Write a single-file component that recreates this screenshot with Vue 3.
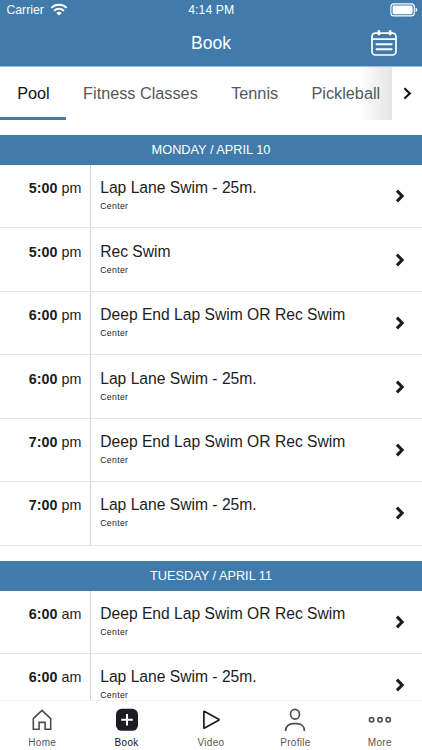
<script setup>
import { ref } from 'vue'

const tabs = ['Pool', 'Fitness Classes', 'Tennis', 'Pickleball']
const activeTab = ref('Pool')
const activeNav = ref('Book')

const days = [
  {
    title: 'MONDAY / APRIL 10',
    classes: [
      { time: '5:00', half: 'pm', name: 'Lap Lane Swim - 25m.' },
      { time: '5:00', half: 'pm', name: 'Rec Swim' },
      { time: '6:00', half: 'pm', name: 'Deep End Lap Swim OR Rec Swim' },
      { time: '6:00', half: 'pm', name: 'Lap Lane Swim - 25m.' },
      { time: '7:00', half: 'pm', name: 'Deep End Lap Swim OR Rec Swim' },
      { time: '7:00', half: 'pm', name: 'Lap Lane Swim - 25m.' },
    ],
  },
  {
    title: 'TUESDAY / APRIL 11',
    classes: [
      { time: '6:00', half: 'am', name: 'Deep End Lap Swim OR Rec Swim' },
      { time: '6:00', half: 'am', name: 'Lap Lane Swim - 25m.' },
    ],
  },
]

const navItems = ['Home', 'Book', 'Video', 'Profile', 'More']
</script>

<template>
  <div class="app">
    <header class="top">
      <div class="status">
        <div class="carrier">
          <span>Carrier</span>
          <svg width="18" height="13" viewBox="0 0 18 13" fill="none" stroke="#fff" stroke-width="2">
            <path d="M1.3 4.9A10.9 10.9 0 0 1 16.7 4.9" />
            <path d="M4.1 7.9A6.9 6.9 0 0 1 13.9 7.9" />
            <path d="M9 12.6L6.4 10A3.7 3.7 0 0 1 11.6 10Z" fill="#fff" stroke="none" />
          </svg>
        </div>
        <span class="clock">4:14 PM</span>
        <svg class="battery" width="28" height="14" viewBox="0 0 28 14">
          <rect x="0.9" y="0.9" width="23.4" height="12" rx="3" fill="none" stroke="#fff" stroke-width="1.1" />
          <rect x="2.6" y="2.6" width="20" height="8.6" rx="1.4" fill="#fff" />
          <path d="M25.6 4.7Q27.4 5.3 27.4 6.9T25.6 9.1Z" fill="#fff" />
        </svg>
      </div>
      <div class="title-bar">
        <h1>Book</h1>
        <svg class="calendar" width="28" height="28" viewBox="0 0 28 28" fill="none" stroke="#fff" stroke-width="1.7" stroke-linecap="round">
          <rect x="2" y="4.2" width="24" height="21.8" rx="3.4" />
          <path d="M2 10.2H26" />
          <path d="M8.9 2.4V5M20.1 2.4V5" stroke-width="2.8" />
          <path d="M6.5 15.2H21.7M6.5 20.3H21.7" stroke-width="1.9" />
        </svg>
      </div>
    </header>

    <nav class="tabs">
      <div class="tab-list">
        <div
          v-for="tab in tabs"
          :key="tab"
          class="tab"
          :class="{ active: tab === activeTab }"
          @click="activeTab = tab"
        >{{ tab }}</div>
        <div class="fade"></div>
      </div>
      <div class="tab-next">
        <svg width="9" height="13" viewBox="0 0 9 13" fill="none" stroke="#111" stroke-width="2.1">
          <path d="M1.4 1.3L6.8 6.4L1.4 11.5" />
        </svg>
      </div>
    </nav>

    <main class="schedule">
      <section v-for="day in days" :key="day.title" class="day">
        <h2>{{ day.title }}</h2>
        <div v-for="(item, i) in day.classes" :key="i" class="row">
          <div class="time"><b>{{ item.time }}</b> {{ item.half }}</div>
          <div class="info">
            <div class="name">{{ item.name }}</div>
            <div class="place">Center</div>
          </div>
          <svg class="chevron" width="10" height="14" viewBox="0 0 10 14" fill="none" stroke="#1c1d20" stroke-width="3.1">
            <path d="M1.9 1.7L7.1 7L1.9 12.3" />
          </svg>
        </div>
      </section>
    </main>

    <footer class="bottom-nav">
      <div
        v-for="item in navItems"
        :key="item"
        class="nav-item"
        :class="{ active: item === activeNav }"
        @click="activeNav = item"
      >
        <svg v-if="item === 'Home'" width="24" height="24" viewBox="0 0 24 24" fill="none" stroke="#4d4e54" stroke-width="1.6">
          <path d="M3.3 10.6L12 2.3L20.7 10.6V21.2H15.1V14.4H9.1V21.2H3.3Z" />
        </svg>
        <svg v-else-if="item === 'Book'" width="24" height="24" viewBox="0 0 24 24">
          <rect x="1" y="0.8" width="22" height="22" rx="5.6" fill="#1c1d22" />
          <path d="M12 6V17.6M6.2 11.8H17.8" stroke="#fff" stroke-width="2" />
        </svg>
        <svg v-else-if="item === 'Video'" width="24" height="24" viewBox="0 0 24 24" fill="none" stroke="#1c1d22" stroke-width="1.7" stroke-linejoin="round">
          <path d="M4.9 3.6V19.9Q4.9 20.6 5.6 20.1L19.7 12.3Q20.4 11.8 19.7 11.3L5.6 3.4Q4.9 3 4.9 3.6Z" />
        </svg>
        <svg v-else-if="item === 'Profile'" width="24" height="24" viewBox="0 0 24 24" fill="none" stroke="#4d4e54" stroke-width="1.7">
          <ellipse cx="12" cy="6.2" rx="4.5" ry="4.9" />
          <path d="M2.6 22.9C2.6 18.4 5.8 15.7 10 15.7H14C18.2 15.7 21.4 18.4 21.4 22.9" />
        </svg>
        <svg v-else width="24" height="24" viewBox="0 0 24 24" fill="none" stroke="#4d4e54" stroke-width="1.6">
          <circle cx="3.6" cy="11.8" r="2.2" />
          <circle cx="12" cy="11.8" r="2.2" />
          <circle cx="20.2" cy="11.8" r="2.2" />
        </svg>
        <span>{{ item }}</span>
      </div>
    </footer>
  </div>
</template>

<style>
body { margin: 0; background: #fff; }
</style>

<style scoped>
.app { width: 422px; height: 750px; display: flex; flex-direction: column; overflow: hidden; background: #fff; color: #1c1d20; font-family: "Liberation Sans", Arial, sans-serif; }
svg { display: block; flex: none; }

/* header */
.top { flex: none; height: 67px; background: #407bab; color: #fff; border-bottom: 1px solid #9dbbd6; box-sizing: border-box; }
.status { height: 20px; display: grid; grid-template-columns: 1fr auto 1fr; align-items: center; padding: 0 4px 0 6.5px; font-size: 12.2px; }
.carrier { display: flex; align-items: center; gap: 6px; }
.carrier svg { margin-top: -1px; }
.clock { font-size: 12.2px; letter-spacing: 0.1px; margin-right: 2px; }
.battery { justify-self: end; }
.title-bar { height: 45px; display: grid; grid-template-columns: 1fr auto 1fr; align-items: center; padding-right: 24px; }
.title-bar h1 { grid-column: 2; margin: 0; padding-left: 24px; font-size: 17.5px; font-weight: normal; line-height: 20px; }
.calendar { justify-self: end; }

/* tabs */
.tabs { flex: none; height: 53px; display: flex; }
.tab-list { position: relative; z-index: 0; width: 392px; display: flex; overflow: hidden; }
.tab { flex: none; box-sizing: border-box; height: 52.5px; padding: 0 16.2px 0 17.2px; line-height: 52px; font-size: 16.25px; color: #55565c; border-bottom: 3px solid transparent; }
.tab.active { color: #111; border-bottom-color: #407bab; }
.fade { position: absolute; z-index: -1; top: 0; right: 0; bottom: 0; width: 32px; background: linear-gradient(to right, rgba(228, 228, 228, 0), rgba(228, 228, 228, 1)); }
.tab-next { flex: 1; display: flex; align-items: center; padding-left: 11px; }

/* schedule */
.schedule { flex: 1; min-height: 0; overflow: hidden; padding-top: 15px; }
.day { margin-bottom: 15px; }
.day h2 { margin: 0; height: 30px; line-height: 30px; background: #407bab; color: #fff; font-size: 12.75px; font-weight: normal; text-align: center; }
.row { height: 63.45px; box-sizing: border-box; display: flex; align-items: stretch; border-bottom: 1px solid #e6e6e8; }
.time { width: 91px; box-sizing: border-box; padding: 14.2px 8.7px 0 0; border-right: 1px solid #d3d5da; text-align: right; font-size: 14.3px; line-height: 18px; }
.info { flex: 1; padding: 13.2px 0 0 9.2px; }
.name { font-size: 15.65px; line-height: 20px; }
.place { margin-top: 3px; font-size: 8.7px; line-height: 11px; letter-spacing: 0.35px; }
.chevron { align-self: center; margin-right: 17px; }

/* bottom navigation */
.bottom-nav { flex: none; height: 50px; display: flex; background: #fff; border-top: 1px solid #f3f3f4; box-sizing: border-box; }
.nav-item { flex: 1; display: flex; flex-direction: column; align-items: center; padding-top: 7px; color: #55565c; font-size: 10px; letter-spacing: 0.3px; line-height: 12px; }
.nav-item span { margin-top: 5px; }
.nav-item.active { color: #111; }
</style>
